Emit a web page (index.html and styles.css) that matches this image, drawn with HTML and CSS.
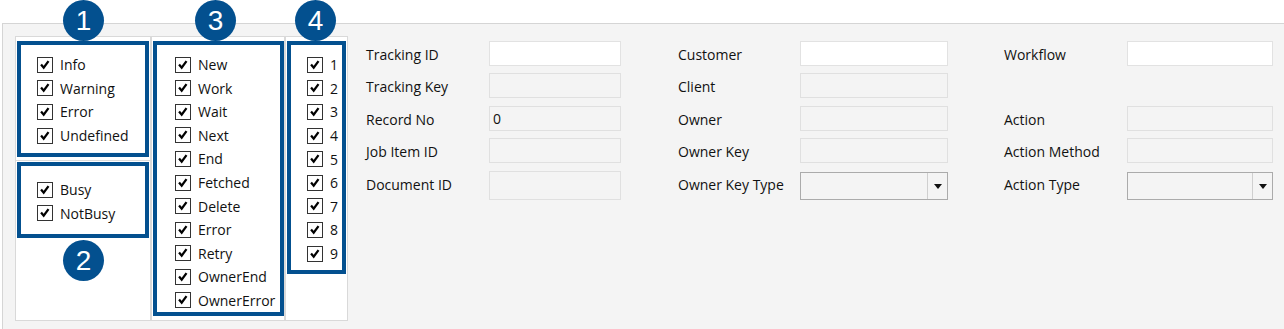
FILE: index.html
```html
<!DOCTYPE HTML>
<html>

<head>
    <meta charset="utf-8">
    <title>Tracking Filter</title>
    <link rel="stylesheet" href="styles.css">
</head>

<body>
<div class="screen">
    <div class="badge b1">1</div>
    <div class="badge b2">2</div>
    <div class="badge b3">3</div>
    <div class="badge b4">4</div>

    <div class="panel">
        <div class="filters">
            <div class="col colLevel">
                <div class="cell cellTop">
                    <div class="hilite boxLevel">
                        <label class="chk"><span class="cb"><svg viewBox="0 0 16 16"><polyline points="3.5,7.5 6.5,11 12,3.5"/></svg></span>Info</label>
                        <label class="chk"><span class="cb"><svg viewBox="0 0 16 16"><polyline points="3.5,7.5 6.5,11 12,3.5"/></svg></span>Warning</label>
                        <label class="chk"><span class="cb"><svg viewBox="0 0 16 16"><polyline points="3.5,7.5 6.5,11 12,3.5"/></svg></span>Error</label>
                        <label class="chk"><span class="cb"><svg viewBox="0 0 16 16"><polyline points="3.5,7.5 6.5,11 12,3.5"/></svg></span>Undefined</label>
                    </div>
                </div>
                <div class="cell">
                    <div class="hilite boxBusy">
                        <label class="chk"><span class="cb"><svg viewBox="0 0 16 16"><polyline points="3.5,7.5 6.5,11 12,3.5"/></svg></span>Busy</label>
                        <label class="chk"><span class="cb"><svg viewBox="0 0 16 16"><polyline points="3.5,7.5 6.5,11 12,3.5"/></svg></span>NotBusy</label>
                    </div>
                </div>
            </div>
            <div class="col colState">
                <div class="hilite boxState">
                    <label class="chk"><span class="cb"><svg viewBox="0 0 16 16"><polyline points="3.5,7.5 6.5,11 12,3.5"/></svg></span>New</label>
                    <label class="chk"><span class="cb"><svg viewBox="0 0 16 16"><polyline points="3.5,7.5 6.5,11 12,3.5"/></svg></span>Work</label>
                    <label class="chk"><span class="cb"><svg viewBox="0 0 16 16"><polyline points="3.5,7.5 6.5,11 12,3.5"/></svg></span>Wait</label>
                    <label class="chk"><span class="cb"><svg viewBox="0 0 16 16"><polyline points="3.5,7.5 6.5,11 12,3.5"/></svg></span>Next</label>
                    <label class="chk"><span class="cb"><svg viewBox="0 0 16 16"><polyline points="3.5,7.5 6.5,11 12,3.5"/></svg></span>End</label>
                    <label class="chk"><span class="cb"><svg viewBox="0 0 16 16"><polyline points="3.5,7.5 6.5,11 12,3.5"/></svg></span>Fetched</label>
                    <label class="chk"><span class="cb"><svg viewBox="0 0 16 16"><polyline points="3.5,7.5 6.5,11 12,3.5"/></svg></span>Delete</label>
                    <label class="chk"><span class="cb"><svg viewBox="0 0 16 16"><polyline points="3.5,7.5 6.5,11 12,3.5"/></svg></span>Error</label>
                    <label class="chk"><span class="cb"><svg viewBox="0 0 16 16"><polyline points="3.5,7.5 6.5,11 12,3.5"/></svg></span>Retry</label>
                    <label class="chk"><span class="cb"><svg viewBox="0 0 16 16"><polyline points="3.5,7.5 6.5,11 12,3.5"/></svg></span>OwnerEnd</label>
                    <label class="chk"><span class="cb"><svg viewBox="0 0 16 16"><polyline points="3.5,7.5 6.5,11 12,3.5"/></svg></span>OwnerError</label>
                </div>
            </div>
            <div class="col colPrio">
                <div class="hilite boxPrio">
                    <label class="chk"><span class="cb"><svg viewBox="0 0 16 16"><polyline points="3.5,7.5 6.5,11 12,3.5"/></svg></span>1</label>
                    <label class="chk"><span class="cb"><svg viewBox="0 0 16 16"><polyline points="3.5,7.5 6.5,11 12,3.5"/></svg></span>2</label>
                    <label class="chk"><span class="cb"><svg viewBox="0 0 16 16"><polyline points="3.5,7.5 6.5,11 12,3.5"/></svg></span>3</label>
                    <label class="chk"><span class="cb"><svg viewBox="0 0 16 16"><polyline points="3.5,7.5 6.5,11 12,3.5"/></svg></span>4</label>
                    <label class="chk"><span class="cb"><svg viewBox="0 0 16 16"><polyline points="3.5,7.5 6.5,11 12,3.5"/></svg></span>5</label>
                    <label class="chk"><span class="cb"><svg viewBox="0 0 16 16"><polyline points="3.5,7.5 6.5,11 12,3.5"/></svg></span>6</label>
                    <label class="chk"><span class="cb"><svg viewBox="0 0 16 16"><polyline points="3.5,7.5 6.5,11 12,3.5"/></svg></span>7</label>
                    <label class="chk"><span class="cb"><svg viewBox="0 0 16 16"><polyline points="3.5,7.5 6.5,11 12,3.5"/></svg></span>8</label>
                    <label class="chk"><span class="cb"><svg viewBox="0 0 16 16"><polyline points="3.5,7.5 6.5,11 12,3.5"/></svg></span>9</label>
                </div>
            </div>
        </div>

        <div class="form">
            <div class="group g1">
                <span class="lbl">Tracking ID</span><input class="txt" type="text">
                <span class="lbl">Tracking Key</span><input class="txt ro" type="text" readonly>
                <span class="lbl">Record No</span><input class="txt ro" type="text" value="0" readonly>
                <span class="lbl">Job Item ID</span><input class="txt ro" type="text" readonly>
                <span class="lbl">Document ID</span><input class="txt ro tall" type="text" readonly>
            </div>
            <div class="group g2">
                <span class="lbl">Customer</span><input class="txt" type="text">
                <span class="lbl">Client</span><input class="txt ro" type="text" readonly>
                <span class="lbl">Owner</span><input class="txt ro" type="text" readonly>
                <span class="lbl">Owner Key</span><input class="txt ro" type="text" readonly>
                <span class="lbl">Owner Key Type</span>
                <div class="combo"><span class="comboVal"></span><span class="comboBtn"><span class="arrow"></span></span></div>
            </div>
            <div class="group g3">
                <span class="lbl">Workflow</span><input class="txt" type="text">
                <span class="lbl"></span><span></span>
                <span class="lbl">Action</span><input class="txt ro" type="text" readonly>
                <span class="lbl">Action Method</span><input class="txt ro" type="text" readonly>
                <span class="lbl">Action Type</span>
                <div class="combo"><span class="comboVal"></span><span class="comboBtn"><span class="arrow"></span></span></div>
            </div>
        </div>
    </div>
</div>
</body>

</html>
```

FILE: styles.css
```css
html, body {
    margin: 0;
    padding: 0;
    background: #ffffff;
}

body {
    font-family: "Open Sans", "Noto Sans", sans-serif;
    font-size: 14px;
    color: #111111;
}

.screen {
    position: relative;
    width: 1284px;
    height: 329px;
    overflow: hidden;
}

/* numbered callouts */
.badge {
    position: absolute;
    z-index: 5;
    width: 41px;
    height: 41px;
    border-radius: 50%;
    background: #03508f;
    color: #ffffff;
    font-family: "Liberation Sans", Arial, sans-serif;
    font-size: 28px;
    line-height: 41px;
    text-align: center;
}
.b1 { left: 63px; top: 0px; }
.b2 { left: 63px; top: 240px; }
.b3 { left: 195px; top: 0px; }
.b4 { left: 295px; top: 0px; }

.panel {
    box-sizing: border-box;
    height: 306px;
    margin: 23px 0 0 2px;
    padding: 12px 0 0 12px;
    border-top: 1px solid #d5d5d5;
    border-left: 1px solid #d5d5d5;
    background: #f4f4f4;
    display: flex;
    align-items: flex-start;
}

/* checkbox columns */
.filters {
    display: flex;
    height: 285px;
}
.col {
    box-sizing: border-box;
    height: 285px;
    border: 1px solid #d9d9d9;
    background: #ffffff;
}
.colLevel { width: 136px; display: flex; flex-direction: column; }
.colState { width: 134px; }
.colPrio { width: 63px; }

.cell { flex: 1; }
.cellTop {
    flex: 0 0 123px;
    border-bottom: 1px solid #dcdcdc;
}

.hilite {
    box-sizing: border-box;
    border: 4px solid #03508f;
    margin: 4px 0 0 1px;
    display: flex;
    flex-direction: column;
}
.boxLevel { width: 132px; height: 116px; padding: 8px 0 0 16px; }
.boxBusy { width: 132px; height: 76px; margin-top: 1px; padding: 12px 0 0 16px; }
.boxState { width: 131px; height: 275px; padding: 8px 0 0 18px; }
.boxPrio { width: 59px; height: 233px; padding: 8px 0 0 16px; }

.chk {
    display: flex;
    align-items: center;
    height: 23.6px;
    white-space: nowrap;
}
.cb {
    box-sizing: border-box;
    width: 16px;
    height: 16px;
    margin-right: 7px;
    border: 1px solid #333333;
    background: #ffffff;
    flex: none;
}
.cb svg {
    display: block;
    width: 14px;
    height: 14px;
    fill: none;
    stroke: #000000;
    stroke-width: 2.6;
}

/* field grid */
.form {
    display: flex;
    margin: 5px 0 0 18px;
}
.group {
    display: grid;
    grid-template-rows: 32px 33px 32px 33px 30px;
}
.g1 { grid-template-columns: 123px 132px; }
.g2 { grid-template-columns: 122px 148px; margin-left: 57px; }
.g3 { grid-template-columns: 123px 146px; margin-left: 56px; }

.lbl {
    box-sizing: border-box;
    display: flex;
    align-items: center;
    height: 25px;
    padding-top: 2px;
    white-space: nowrap;
}

.txt {
    box-sizing: border-box;
    height: 25px;
    margin: 0;
    padding: 0 3px;
    border: 1px solid #e2e2e2;
    background: #ffffff;
    font-family: inherit;
    font-size: 14px;
    color: #111111;
    outline: none;
}
.txt.ro {
    background: #f4f4f4;
    border-color: #e0e0e0;
}
.txt.tall { height: 29px; }

.combo {
    box-sizing: border-box;
    height: 28px;
    margin-top: 1px;
    border: 1px solid #ababab;
    background: #f4f4f4;
    display: flex;
}
.comboVal { flex: 1; }
.comboBtn {
    width: 19px;
    border-left: 1px solid #cfcfcf;
    display: flex;
    align-items: center;
    justify-content: center;
}
.arrow {
    width: 0;
    height: 0;
    border-left: 4px solid transparent;
    border-right: 4px solid transparent;
    border-top: 5px solid #111111;
}
```
